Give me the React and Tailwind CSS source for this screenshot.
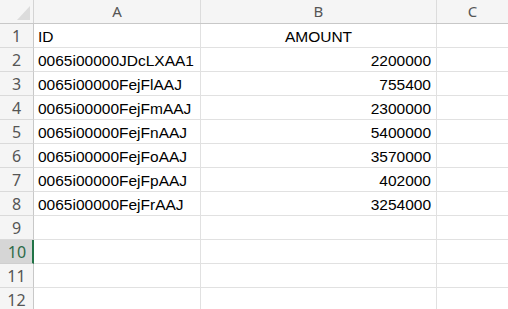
import React from "react";

const rows = [
  ["ID", "AMOUNT", "header"],
  ["0065i00000JDcLXAA1", "2200000"],
  ["0065i00000FejFlAAJ", "755400"],
  ["0065i00000FejFmAAJ", "2300000"],
  ["0065i00000FejFnAAJ", "5400000"],
  ["0065i00000FejFoAAJ", "3570000"],
  ["0065i00000FejFpAAJ", "402000"],
  ["0065i00000FejFrAAJ", "3254000"],
  ["", ""],
  ["", ""],
  ["", ""],
  ["", ""],
];

const cellFont = { fontFamily: '"Liberation Sans", Arial, sans-serif' };
const hdrFont = { fontFamily: '"Noto Sans", "Open Sans", sans-serif' };

export default function App() {
  return (
    <div className="w-[508px] h-[309px] overflow-hidden bg-white">
      {/* column header */}
      <div className="flex h-[24px] bg-[#f5f5f5] border-b border-[#c8c8c8]">
        <div className="w-[34px] shrink-0 border-r border-[#d4d4d4] relative">
          <svg className="absolute left-0 top-0" width="33" height="23" viewBox="0 0 33 23">
            <polygon points="17,20 30,20 30,6" fill="#dcdcdc" />
          </svg>
        </div>
        <div
          className="w-[167px] shrink-0 border-r border-[#dcdcdc] flex items-center justify-center text-[15px] text-[#555] leading-none"
          style={hdrFont}
        >
          A
        </div>
        <div
          className="w-[236px] shrink-0 border-r border-[#dcdcdc] flex items-center justify-center text-[15px] text-[#555] leading-none"
          style={hdrFont}
        >
          B
        </div>
        <div
          className="flex-1 flex items-center justify-center text-[15px] text-[#555] leading-none"
          style={hdrFont}
        >
          C
        </div>
      </div>
      {rows.map((r, i) => {
        const n = i + 1;
        const sel = n === 10;
        return (
          <div key={n} className="flex h-[24px]">
            <div
              className={
                sel
                  ? "w-[34px] shrink-0 bg-[#d6d6d6] border-b border-[#cfcfcf] border-r-2 border-r-[#217346] flex items-center justify-center text-[16px] text-[#2d6a48] pl-[2px]"
                  : "w-[34px] shrink-0 bg-[#f5f5f5] border-b border-[#dadada] border-r border-r-[#c8c8c8] flex items-center justify-center text-[16px] text-[#555]"
              }
              style={hdrFont}
            >
              {n}
            </div>
            <div
              className="w-[167px] shrink-0 border-r border-b border-[#e1e1e1] pl-[4px] text-[15.5px] leading-[25px] text-black whitespace-nowrap overflow-hidden"
              style={cellFont}
            >
              {r[0]}
            </div>
            <div
              className={
                "w-[236px] shrink-0 border-r border-b border-[#e1e1e1] text-[15.5px] leading-[25px] text-black whitespace-nowrap overflow-hidden " +
                (r[2] ? "text-center" : "text-right pr-[5px]")
              }
              style={cellFont}
            >
              {r[1]}
            </div>
            <div className="flex-1 border-b border-[#e1e1e1]"></div>
          </div>
        );
      })}
    </div>
  );
}
